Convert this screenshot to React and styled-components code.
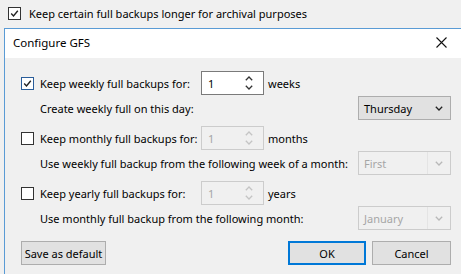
import React from 'react'
import styled, { createGlobalStyle } from 'styled-components'

const GlobalStyle = createGlobalStyle`
  html, body {
    margin: 0;
    padding: 0;
    background: #f0f0f0;
  }
  body {
    font-family: "Noto Sans", "Open Sans", "Liberation Sans", sans-serif;
    font-size: 11px;
    color: #000;
  }
`

const Page = styled.div`
  width: 461px;
  height: 274px;
  overflow: hidden;
  background: #f0f0f0;
  white-space: nowrap;
`

const TopRow = styled.div`
  display: flex;
  align-items: center;
  gap: 8px;
  height: 28px;
  padding-left: 8px;
  box-sizing: border-box;
  padding-bottom: 2px;
`

const Box = styled.span`
  width: 13px;
  height: 13px;
  box-sizing: border-box;
  border: 1px solid ${p => (p.$focus ? '#2a5d9a' : '#333')};
  background: #fff;
  display: inline-flex;
  align-items: center;
  justify-content: center;
  flex: none;
`

const Check = ({ checked, focus }) => (
  <Box $focus={focus}>
    {checked && (
      <svg width="9" height="9" viewBox="0 0 9 9">
        <path d="M1.2 4.6 L3.5 6.9 L7.8 1.8" fill="none" stroke="#222" strokeWidth="1.4" />
      </svg>
    )}
  </Box>
)

const Dialog = styled.div`
  margin-left: 4px;
  width: 470px;
  height: 260px;
  border-left: 1px solid #5a9bd5;
  border-top: 1px solid #5a9bd5;
  background: #f0f0f0;
`

const TitleBar = styled.div`
  height: 29px;
  background: #fff;
  display: flex;
  align-items: center;
  justify-content: space-between;
  padding-left: 8px;
  padding-right: 14px;
  padding-bottom: 2px;
  box-sizing: border-box;
  width: 456px;
`

const Title = styled.span`
  font-size: 11.5px;
`

const Body = styled.div`
  padding: 13px 0 0 16px;
  width: 430px;
  display: flex;
  flex-direction: column;
  gap: 6px;
`

const Group = styled.div`
  display: flex;
  flex-direction: column;
  gap: 1px;
`

const MainRow = styled.div`
  display: flex;
  align-items: center;
  height: 24px;
`

const CheckArea = styled.div`
  width: 19px;
  display: flex;
  align-items: center;
`

const Label = styled.span`
  width: 161px;
`

const Unit = styled.span`
  margin-left: 4px;
`

const SubRow = styled.div`
  display: flex;
  align-items: center;
  justify-content: space-between;
  height: 24px;
  padding-left: 19px;
`

const SpinBox = styled.div`
  width: 63px;
  height: 24px;
  box-sizing: border-box;
  border: 1px solid ${p => (p.$disabled ? '#cccccc' : '#7a7a7a')};
  background: ${p => (p.$disabled ? '#f0f0f0' : '#fff')};
  color: ${p => (p.$disabled ? '#a6a6a6' : '#000')};
  display: flex;
  align-items: center;
  justify-content: space-between;
  padding: 0 10px 0 6px;
`

const SpinArrows = styled.div`
  display: flex;
  flex-direction: column;
  gap: 4px;
`

const Select = styled.div`
  width: 93px;
  height: 24px;
  box-sizing: border-box;
  border: 1px solid ${p => (p.$disabled ? '#cccccc' : '#adadad')};
  background: ${p => (p.$disabled ? '#f0f0f0' : '#e1e1e1')};
  color: ${p => (p.$disabled ? '#a6a6a6' : '#000')};
  display: flex;
  align-items: center;
  justify-content: space-between;
  padding-left: 5px;
`

const Arrow = styled.span`
  width: 22px;
  height: 22px;
  display: flex;
  align-items: center;
  justify-content: center;
  border-left: 1px solid ${p => (p.$disabled ? '#e4e4e4' : 'transparent')};
`

const Chevron = ({ color, up }) => (
  <svg width="8" height="5" viewBox="0 0 8 5">
    <path
      d={up ? 'M0.8 4.2 L4 1 L7.2 4.2' : 'M0.8 0.8 L4 4 L7.2 0.8'}
      fill="none"
      stroke={color}
      strokeWidth="1.3"
    />
  </svg>
)

const Spinner = ({ disabled }) => (
  <SpinBox $disabled={disabled}>
    <span>1</span>
    <SpinArrows>
      <Chevron up color={disabled ? '#c4c4c4' : '#333'} />
      <Chevron color={disabled ? '#c4c4c4' : '#333'} />
    </SpinArrows>
  </SpinBox>
)

const Dropdown = ({ value, disabled }) => (
  <Select $disabled={disabled}>
    <span>{value}</span>
    <Arrow $disabled={disabled}>
      <Chevron color={disabled ? '#b8b8b8' : '#222'} />
    </Arrow>
  </Select>
)

const Footer = styled.div`
  display: flex;
  align-items: center;
  margin-top: 5px;
`

const Button = styled.button`
  height: 24px;
  width: ${p => p.$w}px;
  box-sizing: border-box;
  border: ${p => (p.$primary ? '2px solid #0078d7' : '1px solid #adadad')};
  background: #e1e1e1;
  font-family: inherit;
  font-size: 11px;
  color: #000;
  padding: 0;
  white-space: nowrap;
  margin-left: ${p => p.$ml || 0}px;
`

const CloseIcon = () => (
  <svg width="11" height="11" viewBox="0 0 11 11">
    <path d="M0.5 0.5 L10.5 10.5 M10.5 0.5 L0.5 10.5" stroke="#111" strokeWidth="1.1" />
  </svg>
)

const groups = [
  {
    checked: true,
    label: 'Keep weekly full backups for:',
    unit: 'weeks',
    sub: 'Create weekly full on this day:',
    value: 'Thursday',
  },
  {
    checked: false,
    label: 'Keep monthly full backups for:',
    unit: 'months',
    sub: 'Use weekly full backup from the following week of a month:',
    value: 'First',
  },
  {
    checked: false,
    label: 'Keep yearly full backups for:',
    unit: 'years',
    sub: 'Use monthly full backup from the following month:',
    value: 'January',
  },
]

const App = () => {
  return (
    <>
      <GlobalStyle />
      <Page>
        <TopRow>
          <Check checked />
          <span>Keep certain full backups longer for archival purposes</span>
        </TopRow>
        <Dialog>
          <TitleBar>
            <Title>Configure GFS</Title>
            <CloseIcon />
          </TitleBar>
          <Body>
            {groups.map((g, i) => (
              <Group key={i}>
                <MainRow>
                  <CheckArea>
                    <Check checked={g.checked} focus={g.checked} />
                  </CheckArea>
                  <Label>{g.label}</Label>
                  <Spinner disabled={!g.checked} />
                  <Unit>{g.unit}</Unit>
                </MainRow>
                <SubRow>
                  <span>{g.sub}</span>
                  <Dropdown value={g.value} disabled={!g.checked} />
                </SubRow>
              </Group>
            ))}
            <Footer>
              <Button $w={85}>Save as default</Button>
              <Button $w={78} $primary $ml={182}>OK</Button>
              <Button $w={79} $ml={6}>Cancel</Button>
            </Footer>
          </Body>
        </Dialog>
      </Page>
    </>
  )
}

export default App
